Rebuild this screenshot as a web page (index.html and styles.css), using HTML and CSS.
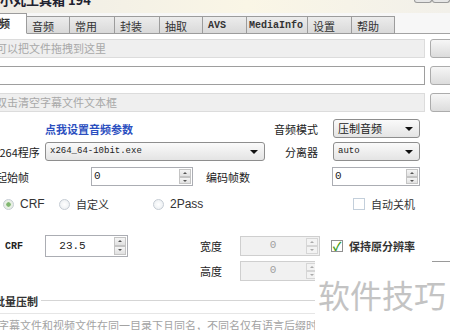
FILE: index.html
```html
<!DOCTYPE html>
<html lang="zh-CN">
<head>
  <meta charset="UTF-8" />
  <title>小丸工具箱 194</title>
  <link rel="stylesheet" href="styles.css">
</head>
<body>

<div class="titlebar">
  <span class="title">小丸工具箱 194</span>
  <div class="winbtns"><span></span><span></span></div>
</div>

<div class="window">
  <div class="tabs">
    <div class="tab active">视频</div>
    <div class="tab w43">音频</div>
    <div class="tab w45">常用</div>
    <div class="tab w45">封装</div>
    <div class="tab w43">抽取</div>
    <div class="tab w44 mono">AVS</div>
    <div class="tab w61 mono">MediaInfo</div>
    <div class="tab w44">设置</div>
    <div class="tab w43">帮助</div>
  </div>

  <div class="panel">
    <div class="file-row">
      <div class="field disabled">可以把文件拖拽到这里</div>
      <button class="side-btn"></button>
    </div>
    <div class="file-row">
      <div class="field"></div>
      <button class="side-btn"></button>
    </div>
    <div class="file-row">
      <div class="field disabled">双击清空字幕文件文本框</div>
      <button class="side-btn"></button>
    </div>

    <div class="row row-link">
      <a class="link">点我设置音频参数</a>
      <span class="lbl push">音频模式</span>
      <div class="select small">压制音频<i class="caret"></i></div>
    </div>

    <div class="row row-prog">
      <span class="lbl prog-lbl">x264程序</span>
      <div class="select wide code">x264_64-10bit.exe<i class="caret"></i></div>
      <span class="lbl push">分离器</span>
      <div class="select small code">auto<i class="caret"></i></div>
    </div>

    <div class="row row-frames">
      <span class="lbl start-lbl">起始帧</span>
      <div class="spin start-spin"><span class="val">0</span><span class="arrows"><b></b><b class="dn"></b></span></div>
      <span class="lbl count-lbl">编码帧数</span>
      <div class="spin count-spin push"><span class="val">0</span><span class="arrows"><b></b><b class="dn"></b></span></div>
    </div>

    <div class="row row-mode">
      <label class="opt opt-crf"><i class="radio on"></i>CRF</label>
      <label class="opt opt-custom"><i class="radio"></i>自定义</label>
      <label class="opt"><i class="radio"></i>2Pass</label>
      <label class="opt push shutdown"><i class="check"></i>自动关机</label>
    </div>

    <div class="row row-crf">
      <span class="lbl mono crf-lbl">CRF</span>
      <div class="spin crf-spin"><span class="val center">23.5</span><span class="arrows"><b></b><b class="dn"></b></span></div>
      <span class="lbl size-lbl">宽度</span>
      <div class="spin off size-spin"><span class="val center">0</span><span class="arrows"><b></b><b class="dn"></b></span></div>
      <label class="opt keep"><i class="check on">✓</i>保持原分辨率</label>
    </div>

    <div class="row row-height">
      <span class="lbl size-lbl">高度</span>
      <div class="spin off size-spin"><span class="val center">0</span><span class="arrows"><b></b><b class="dn"></b></span></div>
    </div>

    <div class="group">
      <span class="group-title">批量压制</span>
      <span class="group-line"></span>
    </div>
    <div class="batch-note">当字幕文件和视频文件在同一目录下且同名，不同名仅有语言后缀时</div>
  </div>
</div>

<div class="watermark"><span class="wm-line"></span>软件技巧</div>

</body>
</html>
```

FILE: styles.css
```css
body {
  margin: 0;
  width: 450px;
  height: 330px;
  overflow: hidden;
  background: #fff;
  font-family: "Noto Sans CJK SC", "DejaVu Sans", sans-serif;
  font-size: 11px;
  color: #222;
  position: relative;
}

.titlebar {
  height: 13px;
  display: flex;
  overflow: hidden;
  background: linear-gradient(90deg, #eeece6, #faf6e6 55%, #f2f0ea);
}

.title {
  margin-top: -10px;
  font-size: 13px;
  font-weight: bold;
  color: #1e2230;
}

.winbtns {
  margin-left: auto;
  display: flex;
  height: 4px;
  margin-top: -1px;
}

.winbtns span {
  width: 16px;
  border: 1px solid #9a9a9a;
  border-top: none;
  border-radius: 0 0 3px 3px;
  background: #e6e6e6;
}

.window {
  margin-left: -17px;
  width: 480px;
}

.mono {
  font-family: "Liberation Mono", monospace;
  font-size: 10px;
  font-weight: bold;
}

.code {
  font-family: "Liberation Mono", monospace;
  font-size: 9px;
  font-weight: normal;
}

/* tabs */
.tabs {
  display: flex;
  align-items: flex-end;
  height: 20px;
  border-bottom: 1px solid #a3a3a3;
  background: #f7f7f7;
}

.tab {
  box-sizing: border-box;
  width: 45px;
  height: 18px;
  padding: 1px 0 0 5px;
  margin-bottom: -1px;
  border: 1px solid #9c9c9c;
  border-left: none;
  background: linear-gradient(#ececec, #d9d9d9);
  color: #333;
  line-height: 16px;
}

.tab.active {
  width: 44px;
  height: 21px;
  background: #fff;
  border-bottom-color: #fff;
  font-weight: bold;
}

.tab.w43 { width: 43px; }
.tab.w44 { width: 44px; }
.tab.w45 { width: 45px; }
.tab.w61 { width: 61px; padding-left: 2px; }

.panel {
  background: #fff;
  padding-top: 5px;
}

/* file boxes */
.file-row {
  display: flex;
  height: 19px;
  margin-bottom: 8px;
  padding-left: 8px;
}

.field {
  width: 434px;
  box-sizing: border-box;
  border: 1px solid #9e9e9e;
  background: #fff;
  padding-left: 4px;
  line-height: 17px;
}

.field.disabled {
  background: #efefef;
  border-color: #dcdcdc;
  color: #a8a8a8;
}

.side-btn {
  width: 26px;
  margin-left: 5px;
  padding: 0;
  border: 1px solid #acacac;
  border-radius: 3px;
  background: linear-gradient(#f6f6f6, #dcdcdc);
}

/* rows */
.row {
  display: flex;
  align-items: center;
  padding-right: 43px;
}

.push { margin-left: auto; }

.lbl { white-space: nowrap; }

.row-link { height: 19px; margin-top: -1px; }
.row-prog { height: 19px; margin-top: 4px; }
.row-frames { height: 19px; margin-top: 6px; }
.row-mode { height: 18px; margin-top: 9px; padding-right: 48px; }
.row-crf { height: 22px; margin-top: 22px; }
.row-height { height: 20px; margin-top: 4px; }

.link {
  margin-left: 62px;
  color: #2c4fbf;
  font-weight: bold;
}

.select {
  position: relative;
  box-sizing: border-box;
  height: 19px;
  margin-left: 15px;
  padding-left: 4px;
  border: 1px solid #8e8e8e;
  border-radius: 3px;
  background: linear-gradient(#fafafa, #e4e4e4);
  line-height: 17px;
}

.select.small { width: 87px; }

.select.wide {
  width: 220px;
  margin-left: 0;
}

.caret {
  position: absolute;
  right: 6px;
  top: 7px;
  border-left: 4px solid transparent;
  border-right: 4px solid transparent;
  border-top: 4px solid #111;
}

.prog-lbl { margin-left: 11px; width: 51px; }
.start-lbl { margin-left: 13px; width: 95px; }
.count-lbl { margin-left: 13px; }

.spin {
  box-sizing: border-box;
  display: flex;
  height: 19px;
  border: 1px solid #abadb3;
  background: #fff;
}

.spin .val {
  flex: 1;
  padding-left: 2px;
  line-height: 17px;
  font-family: "Liberation Mono", monospace;
}

.spin .val.center {
  text-align: center;
  padding-left: 0;
}

.arrows {
  width: 12px;
  margin: 1px;
  display: flex;
  flex-direction: column;
}

.arrows b {
  flex: 1;
  position: relative;
  background: linear-gradient(#f5f5f5, #e1e1e1);
  border: 1px solid #c4c4c4;
}

.arrows b::after {
  content: "";
  position: absolute;
  left: 3px;
  top: 2px;
  border-left: 2px solid transparent;
  border-right: 2px solid transparent;
  border-bottom: 2px solid #555;
}

.arrows b.dn::after {
  border-bottom: none;
  border-top: 2px solid #555;
}

.start-spin { width: 102px; }
.count-spin { width: 88px; }

.crf-lbl { margin-left: 22px; width: 40px; }
.crf-spin { width: 83px; height: 22px; }
.crf-spin .val { line-height: 20px; padding-right: 14px; }

.size-lbl { margin-left: 72px; width: 40px; }
.row-height .size-lbl { margin-left: 217px; }

.spin.off {
  background: #f1f1f1;
  border-color: #cfcfcf;
  color: #a0a0a0;
  height: 20px;
}

.spin.off .arrows b { background: #f3f3f3; border-color: #d6d6d6; }
.spin.off .arrows b::after { border-bottom-color: #aaa; border-top-color: #aaa; }

.size-spin { width: 80px; }

/* options */
.opt {
  display: flex;
  align-items: center;
  white-space: nowrap;
  color: #333;
}

.opt-crf { margin-left: 20px; width: 56px; }
.opt-custom { width: 94px; }
.row-mode .opt { font-family: "Liberation Sans", sans-serif; font-size: 12px; }
.row-mode .opt-custom,
.row-mode .shutdown { font-family: "Noto Sans CJK SC", sans-serif; font-size: 11px; }

.radio {
  width: 9px;
  height: 9px;
  margin-right: 6px;
  border: 1px solid #c5ccd4;
  border-radius: 50%;
  background: radial-gradient(#fff, #e8ecef);
}

.radio.on {
  background: radial-gradient(#7fb66f 30%, #e7efe4 40%);
}

.check {
  box-sizing: border-box;
  width: 12px;
  height: 12px;
  margin-right: 6px;
  border: 1px solid #c3cfdb;
  background: #fff;
  font-style: normal;
  font-size: 12px;
  line-height: 10px;
  text-align: center;
  color: #3e9a22;
  font-weight: bold;
}

.check.on { border-color: #8f8f8f; }

.keep {
  margin-left: 11px;
  font-weight: bold;
}

/* batch group */
.group {
  display: flex;
  align-items: center;
  height: 16px;
  margin-top: 12px;
  padding-left: 11px;
}

.group-title {
  font-weight: bold;
  color: #333;
}

.group-line {
  flex: 1;
  margin-left: 3px;
  border-top: 1px solid #d5d5d5;
  border-bottom: 1px solid #fff;
}

.batch-note {
  margin-top: 4px;
  margin-left: 4px;
  padding-top: 3px;
  border-top: 1px solid #e6e6e6;
  color: #a3a3a3;
  white-space: nowrap;
}

/* watermark */
.watermark {
  position: absolute;
  left: 315px;
  top: 258px;
  right: 0;
  bottom: 0;
  background: #fff;
  padding: 16px 0 0 3px;
  font-size: 32px;
  line-height: 40px;
  color: #c3c3c3;
  white-space: nowrap;
}

.wm-line {
  position: absolute;
  top: 3px;
  left: 117px;
  width: 20px;
  border-top: 1px solid #9a9a9a;
}
```
